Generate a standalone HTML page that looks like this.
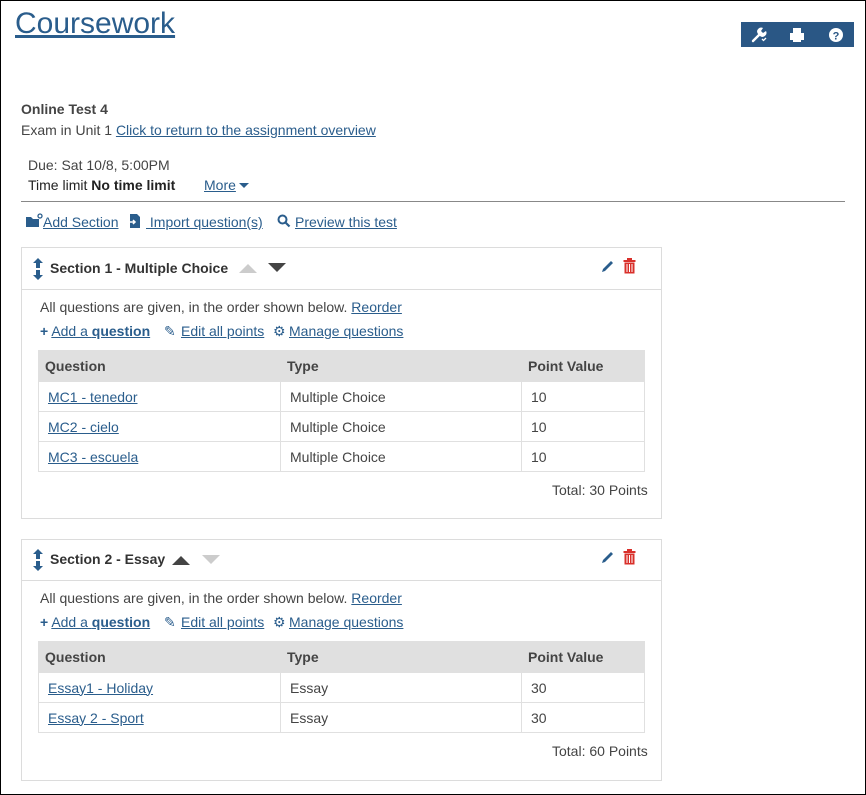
<!DOCTYPE html>
<html><head><meta charset="utf-8">
<style>
*{margin:0;padding:0;box-sizing:border-box}
html,body{width:866px;height:795px;overflow:hidden;background:#fff}
body{font-family:"Liberation Sans",sans-serif;font-size:14px;color:#444;position:relative}
.frame{position:absolute;left:0;top:0;width:866px;height:795px;border:1px solid #000}
.a{position:absolute;white-space:nowrap;line-height:16px}
a,.lk{color:#2a5d8c;text-decoration:underline}
.box{position:absolute;border:1px solid #dcdcdc;background:#fff}
.hd{position:absolute;left:0;right:0;top:0;border-bottom:1px solid #dcdcdc}
table{position:absolute;border-collapse:collapse;font-size:14px}
td,th{height:30px;border:1px solid #e0e0e0;padding:0 9px;text-align:left;color:#444}
th{background:#e0e0e0;font-weight:bold;color:#444;height:31px;padding:0 6px}
.tri{position:absolute;width:0;height:0;border-left:9px solid transparent;border-right:9px solid transparent}
.ic{position:absolute}
</style></head><body>
<div class="frame"></div>
<div class="a" style="left:15px;top:6px;font-size:30px;line-height:35px;color:#2a5d8c;text-decoration:underline">Coursework</div>
<div style="position:absolute;left:741px;top:22px;width:113px;height:25px;background:#2a5785"></div>
<svg class="ic" style="left:750px;top:26px" width="18" height="18" viewBox="0 0 18 18"><path d="M3 15 L9 9" stroke="#fff" stroke-width="2.4" stroke-linecap="round"/><path d="M8 8 a4 4 0 0 1 5 -6 l-2 3 l2 2 l3 -2 a4 4 0 0 1 -6 5z" fill="#fff"/><path d="M12 13 l1.5 1.5 l2.5 -2.5" stroke="#fff" stroke-width="1.3" fill="none"/></svg>
<svg class="ic" style="left:789px;top:27px" width="16" height="16" viewBox="0 0 16 16"><rect x="4" y="1" width="8" height="5" fill="#fff"/><rect x="1" y="6" width="14" height="7" fill="#fff"/><rect x="4" y="10" width="8" height="5" fill="#fff"/></svg>
<svg class="ic" style="left:828px;top:27px" width="16" height="16" viewBox="0 0 16 16"><circle cx="8" cy="8" r="7" fill="#fff"/><text x="8" y="12.5" font-family="Liberation Sans" font-weight="bold" font-size="11" text-anchor="middle" fill="#2a5785">?</text></svg>

<div class="a" style="left:21px;top:101px;font-weight:bold;color:#444">Online Test 4</div>
<div class="a" style="left:21px;top:122px">Exam in Unit 1 <a>Click to return to the assignment overview</a></div>
<div class="a" style="left:28px;top:157px">Due: Sat 10/8, 5:00PM</div>
<div class="a" style="left:28px;top:177px;color:#222">Time limit <b>No time limit</b></div>
<div class="a" style="left:204px;top:177px"><a>More</a></div>
<div class="tri" style="left:239px;top:183px;border-width:5px 5px 0;border-top:5px solid #2a5d8c;border-left-color:transparent"></div>
<div style="position:absolute;left:21px;top:201px;width:824px;height:1px;background:#888"></div>

<svg class="ic" style="left:25px;top:213px" width="18" height="16" viewBox="0 0 18 16"><path d="M1 4 h5 l2 2 h6 v8 h-13z" fill="#2a5d8c"/><circle cx="15" cy="3" r="2" fill="none" stroke="#2a5d8c" stroke-width="1.3"/></svg>
<div class="a" style="left:43px;top:214px"><a>Add Section</a></div>
<svg class="ic" style="left:128px;top:213px" width="14" height="16" viewBox="0 0 14 16"><path d="M2 1 h7 l3 3 v11 h-10z" fill="#2a5d8c"/><path d="M1 9 h6 m-2 -2 l2 2 l-2 2" stroke="#fff" stroke-width="1.5" fill="none"/></svg>
<div class="a" style="left:146px;top:214px"><a>&nbsp;Import question(s)</a></div>
<svg class="ic" style="left:277px;top:214px" width="14" height="14" viewBox="0 0 14 14"><circle cx="5.5" cy="5.5" r="4" stroke="#2a5d8c" stroke-width="2" fill="none"/><path d="M8.5 8.5 l4 4" stroke="#2a5d8c" stroke-width="2.2"/></svg>
<div class="a" style="left:295px;top:214px"><a>Preview this test</a></div>

<!-- Section 1 -->
<div class="box" style="left:21px;top:247px;width:641px;height:272px">
 <div class="hd" style="height:42px"></div>
</div>
<svg class="ic" style="left:33px;top:258px" width="10" height="22" viewBox="0 0 10 22"><path d="M5 0 l5 5 h-3 v5 h-4 v-5 h-3z M5 22 l5 -5 h-3 v-5 h-4 v5 h-3z" fill="#2a5d8c"/></svg>
<div class="a" style="left:50px;top:260px;font-weight:bold;color:#333">Section 1 - Multiple Choice</div>
<div class="tri" style="left:239px;top:264px;border-bottom:9px solid #ccc"></div>
<div class="tri" style="left:268px;top:263px;border-top:9px solid #444"></div>
<svg class="ic" style="left:600px;top:259px" width="15" height="15" viewBox="0 0 15 15"><path d="M2 13 l1 -3 l8 -8 l2 2 l-8 8z" fill="#2a5d8c"/></svg>
<svg class="ic" style="left:623px;top:258px" width="13" height="16" viewBox="0 0 13 16"><rect x="0.5" y="2" width="12" height="2" fill="#d9302b"/><rect x="4" y="0" width="5" height="2.5" fill="#d9302b"/><path d="M1.5 4.5 h10 v11 h-10z" fill="#d9302b"/><path d="M4 6 v8 M6.5 6 v8 M9 6 v8" stroke="#fff" stroke-width="1"/></svg>
<div class="a" style="left:40px;top:299px">All questions are given, in the order shown below. <a>Reorder</a></div>
<div class="a" style="left:40px;top:323px"><span style="color:#2a5d8c;font-weight:bold">+</span> <a>Add a <b>question</b></a></div>
<div class="a" style="left:164px;top:323px"><span style="color:#2a5d8c;display:inline-block;width:17px">&#9998;</span><a>Edit all points</a></div>
<div class="a" style="left:273px;top:323px"><span style="color:#2a5d8c;display:inline-block;width:16px">&#9881;</span><a>Manage questions</a></div>
<table style="left:38px;top:350px;width:607px">
<tr><th style="width:242px">Question</th><th style="width:241px">Type</th><th>Point Value</th></tr>
<tr><td><a>MC1 - tenedor</a></td><td>Multiple Choice</td><td>10</td></tr>
<tr><td><a>MC2 - cielo</a></td><td>Multiple Choice</td><td>10</td></tr>
<tr><td><a>MC3 - escuela</a></td><td>Multiple Choice</td><td>10</td></tr>
</table>
<div class="a" style="left:552px;top:482px">Total: 30 Points</div>

<!-- Section 2 -->
<div class="box" style="left:21px;top:539px;width:641px;height:242px">
 <div class="hd" style="height:41px"></div>
</div>
<svg class="ic" style="left:33px;top:549px" width="10" height="22" viewBox="0 0 10 22"><path d="M5 0 l5 5 h-3 v5 h-4 v-5 h-3z M5 22 l5 -5 h-3 v-5 h-4 v5 h-3z" fill="#2a5d8c"/></svg>
<div class="a" style="left:50px;top:551px;font-weight:bold;color:#333">Section 2 - Essay</div>
<div class="tri" style="left:172px;top:556px;border-bottom:9px solid #444"></div>
<div class="tri" style="left:202px;top:555px;border-top:9px solid #ccc"></div>
<svg class="ic" style="left:600px;top:550px" width="15" height="15" viewBox="0 0 15 15"><path d="M2 13 l1 -3 l8 -8 l2 2 l-8 8z" fill="#2a5d8c"/></svg>
<svg class="ic" style="left:623px;top:549px" width="13" height="16" viewBox="0 0 13 16"><rect x="0.5" y="2" width="12" height="2" fill="#d9302b"/><rect x="4" y="0" width="5" height="2.5" fill="#d9302b"/><path d="M1.5 4.5 h10 v11 h-10z" fill="#d9302b"/><path d="M4 6 v8 M6.5 6 v8 M9 6 v8" stroke="#fff" stroke-width="1"/></svg>
<div class="a" style="left:40px;top:590px">All questions are given, in the order shown below. <a>Reorder</a></div>
<div class="a" style="left:40px;top:614px"><span style="color:#2a5d8c;font-weight:bold">+</span> <a>Add a <b>question</b></a></div>
<div class="a" style="left:164px;top:614px"><span style="color:#2a5d8c;display:inline-block;width:17px">&#9998;</span><a>Edit all points</a></div>
<div class="a" style="left:273px;top:614px"><span style="color:#2a5d8c;display:inline-block;width:16px">&#9881;</span><a>Manage questions</a></div>
<table style="left:38px;top:641px;width:607px">
<tr><th style="width:242px">Question</th><th style="width:241px">Type</th><th>Point Value</th></tr>
<tr><td><a>Essay1 - Holiday</a></td><td>Essay</td><td>30</td></tr>
<tr><td><a>Essay 2 - Sport</a></td><td>Essay</td><td>30</td></tr>
</table>
<div class="a" style="left:552px;top:743px">Total: 60 Points</div>
</body></html>
